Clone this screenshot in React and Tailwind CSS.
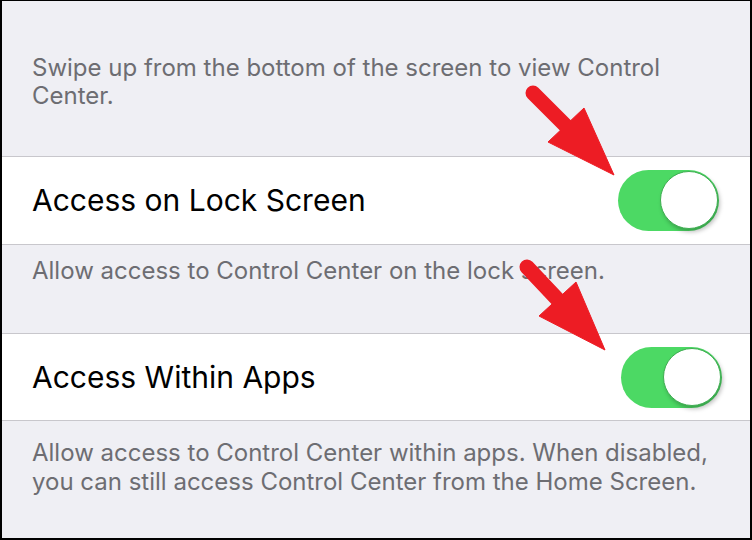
import React from "react";

function Toggle({ className = "" }) {
  return (
    <div className={"relative w-[101px] h-[61px] rounded-full bg-[#4cd964] shrink-0 " + className}>
      <div className="absolute right-[1px] top-[1px] w-[58px] h-[58px] rounded-full bg-white border border-[#3fae52] shadow-[2px_3px_4px_rgba(0,0,0,0.25)]" />
    </div>
  );
}

export default function App() {
  const font = { fontFamily: "Inter, 'Noto Sans', sans-serif" };
  return (
    <div className="relative w-[752px] h-[540px] overflow-hidden" style={font}>
      <div className="h-full bg-[#efeff4] border-x-2 border-t border-b-2 border-black flex flex-col">
        <div className="h-[155px] px-[30px] pt-[53px] text-[24px] leading-[28px] text-[#6d6d72]">
          Swipe up from the bottom of the screen to view Control
          <br />
          Center.
        </div>
        <div className="h-[89px] bg-white border-y border-[#c8c7cc] flex items-center justify-between pl-[30px] pr-[31px]">
          <span className="text-[30px] text-black">Access on Lock Screen</span>
          <Toggle />
        </div>
        <div className="h-[88px] px-[30px] pt-[12px] text-[24px] leading-[28px] text-[#6d6d72]">
          Allow access to Control Center on the lock screen.
        </div>
        <div className="h-[88px] bg-white border-y border-[#c8c7cc] flex items-center justify-between pl-[30px] pr-[28px]">
          <span className="text-[30px] text-black">Access Within Apps</span>
          <Toggle />
        </div>
        <div className="flex-1 px-[30px] pt-[17px] text-[24px] leading-[29px] text-[#6d6d72]">
          Allow access to Control Center within apps. When disabled,
          <br />
          you can still access Control Center from the Home Screen.
        </div>
      </div>
      <svg className="absolute left-0 top-0 pointer-events-none" width="752" height="540" viewBox="0 0 752 540">
        <g fill="#ed1c24" stroke="#ed1c24">
          <line x1="533" y1="93" x2="568" y2="128" strokeWidth="15" strokeLinecap="round" />
          <polygon points="548,142 584,108 614,175" strokeWidth="1" />
          <line x1="527" y1="267" x2="560" y2="302" strokeWidth="15" strokeLinecap="round" />
          <polygon points="539,316 576,282 605,350" strokeWidth="1" />
        </g>
      </svg>
    </div>
  );
}
